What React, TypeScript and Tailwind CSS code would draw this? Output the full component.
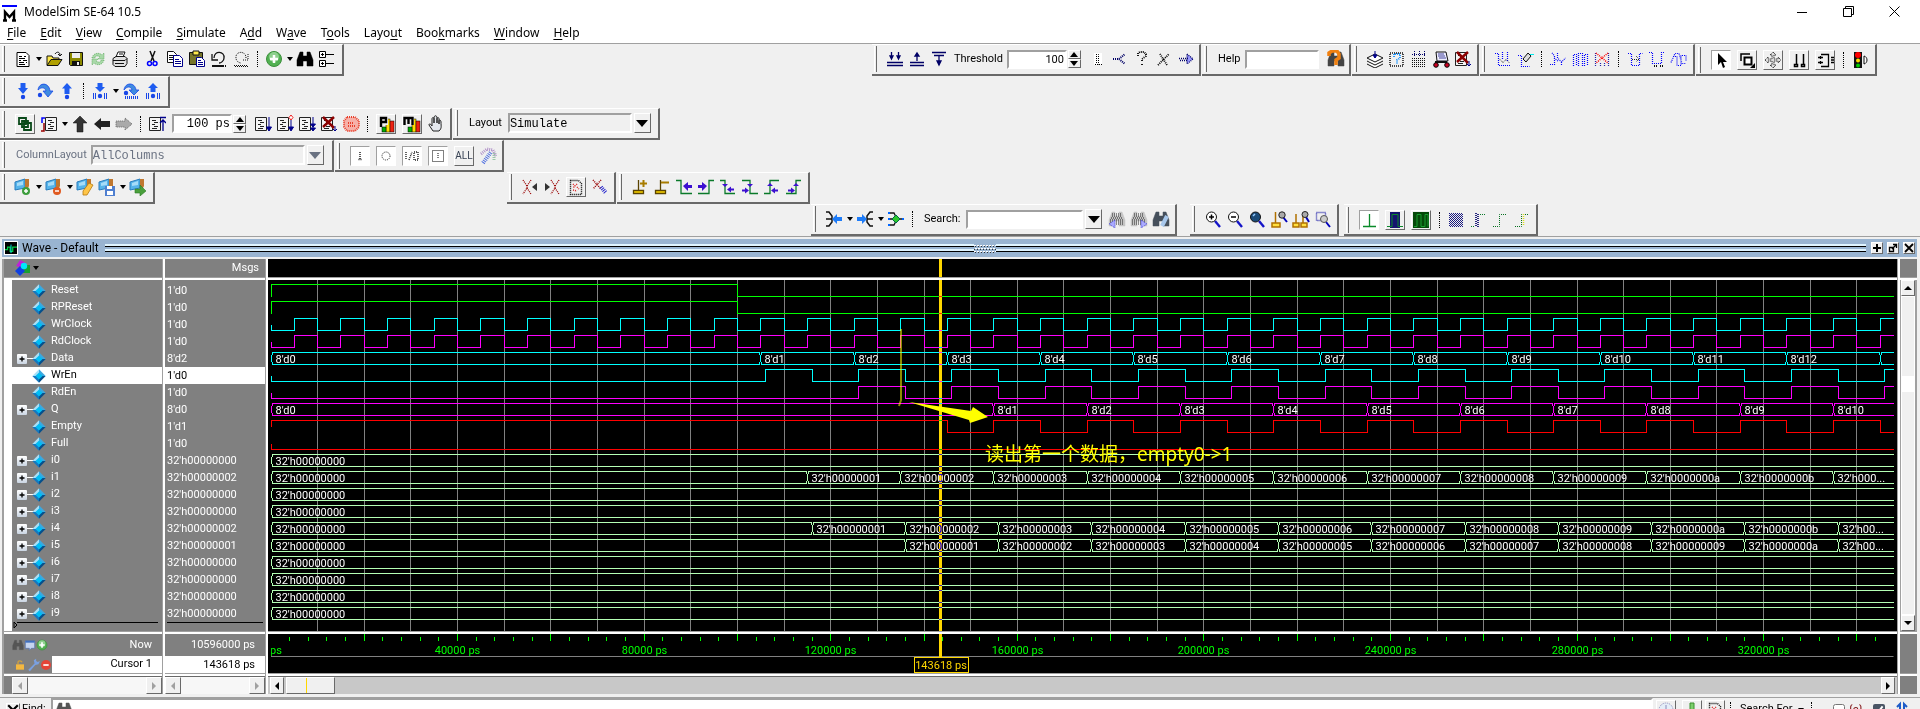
import type { ReactNode } from 'react';
import clsx from 'clsx';

type Point = [number, string];

interface Signal {
  name: string;
  value: string;
  color: string;
  start?: 0 | 1;
  lead?: number;
  edges?: number[];
  bus?: Point[];
}

const GREEN = '#00ff00';
const CYAN = '#00ffff';
const MAGENTA = '#ff00ff';
const RED = '#ff0000';
const MINT = '#b4ffb4';

const T_END = 347800;
const PX_PER_PS = 0.0046643;
const ROW = 17;
const CURSOR = 143618;

const range = (from: number, step: number, to = T_END) => {
  const out: number[] = [];
  for (let t = from; t < to; t += step) out.push(t);
  return out;
};

const hex = (n: number) => `32'h${n.toString(16).padStart(8, '0')}`;

const dataBus: Point[] = [[0, "8'd0"], ...range(105000, 20000, 340000).map((t, i): Point => [t, `8'd${i + 1}`]), [345000, '']];
const qBus: Point[] = [[0, "8'd0"], ...range(155000, 20000).map((t, i): Point => [t, `8'd${i + 1}`])];

function hexBus(from: number, last: string): Point[] {
  const steps = range(from, 20000);
  return [[0, hex(0)], ...steps.map((t, i): Point => [t, i === steps.length - 1 ? last : hex(i + 1)])];
}

const idle: Point[] = [[0, hex(0)]];
const clock = range(5000, 5000);

const signals: Signal[] = [
  { name: 'Reset', value: "1'd0", color: GREEN, start: 1, lead: 12, edges: [100000] },
  { name: 'RPReset', value: "1'd0", color: GREEN, start: 1, lead: 12, edges: [100000] },
  { name: 'WrClock', value: "1'd0", color: CYAN, start: 0, edges: clock },
  { name: 'RdClock', value: "1'd0", color: MAGENTA, start: 0, edges: clock },
  { name: 'Data', value: "8'd2", color: CYAN, bus: dataBus },
  { name: 'WrEn', value: "1'd0", color: CYAN, start: 0, edges: range(106000, 10000) },
  { name: 'RdEn', value: "1'd0", color: MAGENTA, start: 0, edges: range(126000, 10000) },
  { name: 'Q', value: "8'd0", color: MAGENTA, bus: qBus },
  { name: 'Empty', value: "1'd1", color: RED, start: 1, edges: range(145000, 10000) },
  { name: 'Full', value: "1'd0", color: RED, start: 0, edges: [] },
  { name: 'i0', value: hex(0), color: MINT, bus: idle },
  { name: 'i1', value: hex(2), color: MINT, bus: hexBus(115000, "32'h000...") },
  { name: 'i2', value: hex(0), color: MINT, bus: idle },
  { name: 'i3', value: hex(0), color: MINT, bus: idle },
  { name: 'i4', value: hex(2), color: MINT, bus: hexBus(116000, "32'h00...") },
  { name: 'i5', value: hex(1), color: MINT, bus: hexBus(136000, "32'h00...") },
  { name: 'i6', value: hex(0), color: MINT, bus: idle },
  { name: 'i7', value: hex(0), color: MINT, bus: idle },
  { name: 'i8', value: hex(0), color: MINT, bus: idle },
  { name: 'i9', value: hex(0), color: MINT, bus: idle },
];

const tx = (t: number) => Math.floor(3 + t * PX_PER_PS) + 0.5;

function digitalPath(s: Signal, mid: number) {
  const y = (level: number) => (level ? mid - 6 : mid + 6);
  let level = s.start ?? 0;
  const lead = s.lead ?? 6;
  let d = `M${tx(0)} ${level ? y(1) + lead : y(0) - lead}V${y(level)}`;
  for (const t of s.edges ?? []) {
    level = level ? 0 : 1;
    d += `H${tx(t)}V${y(level)}`;
  }
  return `${d}H${tx(T_END)}`;
}

function busPath(points: Point[], mid: number) {
  const top = mid - 6;
  const bottom = mid + 6;
  return points
    .map(([t], i) => {
      const x = tx(t);
      const end = i + 1 < points.length ? tx(points[i + 1][0]) - 1 : tx(T_END);
      const close = i + 1 < points.length ? `M${end} ${top}v2l1 1M${end} ${bottom}v-2l1 -1` : '';
      return `M${end} ${top}H${x + 1}v2l-1 1V${bottom - 3}l1 1V${bottom}H${end}${close}`;
    })
    .join('');
}

function WaveCanvas() {
  return (
    <svg className="block h-[351px] w-full bg-black font-[Roboto,sans-serif] text-[11px]">
      <g shapeRendering="crispEdges" fill="none">
        {range(10000, 10000).map((t) => (
          <path key={t} d={`M${tx(t)} 0V351`} stroke="#808080" />
        ))}
        {signals.map((s, i) => {
          const mid = 10.5 + i * ROW;
          return <path key={s.name} d={s.bus ? busPath(s.bus, mid) : digitalPath(s, mid)} stroke={s.color} />;
        })}
      </g>
      {signals.map((s, i) =>
        s.bus?.map(([t, label]) => (
          <text key={`${s.name}${t}`} x={tx(t) + 4} y={15 + i * ROW} fill="#fff">{label}</text>
        )),
      )}
      <rect x={tx(CURSOR) - 1.5} width="3" height="351" fill="#ffd700" className="mix-blend-difference" />
      <path d="M633 49V120l-2 6" stroke="#ffff00" strokeOpacity=".55" strokeWidth="2" fill="none" />
      <path d="M641 122L703 131L705 127L720 137L702 143L701 140Z" fill="#ffff00" />
      <text x="717" y="181" fill="#ffff00" className="font-['Noto_Sans','Noto_Sans_CJK_SC',sans-serif] text-[19px]">
        读出第一个数据，empty0-&gt;1
      </text>
    </svg>
  );
}

function Ruler() {
  return (
    <svg className="block h-[39px] w-full bg-black font-[Roboto,sans-serif] text-[11px]">
      <clipPath id="ruler-area"><rect x="3" width="4000" height="39" /></clipPath>
      <g clipPath="url(#ruler-area)">
        <g shapeRendering="crispEdges" stroke={GREEN}>
          {range(4000, 4000).map((t) => (
            <path key={t} d={`M${tx(t)} ${t % 20000 ? 3 : 0}V7`} />
          ))}
        </g>
        {range(0, 40000).map((t) => (
          <text key={t} x={tx(t)} y="20" fill={GREEN} textAnchor="middle">{t} ps</text>
        ))}
        <path d={`M3 22.5H${tx(T_END)}`} stroke="#808080" />
        <rect x={tx(CURSOR) - 1.5} width="3" height="23" fill="#ffd700" />
        <rect x="646.5" y="23.5" width="54" height="15" fill="#000" stroke="#ffd700" />
        <text x="673" y="35" fill="#ffd700" textAnchor="middle">143618 ps</text>
      </g>
    </svg>
  );
}

/* ---------- toolbar drawings, all on an 18 x 18 grid ---------- */

const dots = { strokeDasharray: '1 1' };
const navy = '#00008b';

const page = <path d="M3 2.500h9l3 3v11H3zM5 6.500h3m2 0h2M5 8.500h6M5 10.500h2m2 0h4M5 12.500h5m2 0h1M5 14.500h6" fill="#fff" stroke="#000" />;
const sheet = <path d="M1.500 2.500h11v13h-11zM4 5.500h4M6 7.500h4M4 9.500h3M6 11.500h4M4 13.500h5" fill="#f4f4f4" stroke="#222" />;
const binoculars = (c: string) => (
  <path d="M4 2h3v4h4V2h3l3 8v6h-6v-5H7v5H1v-6zM6 7v3M12 7v3" fill={c} stroke={c} strokeWidth=".5" />
);
const dotted = 'M2 10h14M2 12h14M2 14h14M3 8h12M4 6h10M4 4h10';
const flag = (
  <>
    <path d="M1 4l10-3v9L1 12z" fill="#56b4ea" stroke="#2a7dbd" />
    <path d="M3 5l6-2v4L3 8z" fill="#a6dcf8" />
    <path d="M11 1h4v7l-2 4h-2z" fill="#c07830" />
  </>
);
const stepBall = (y: number) => <circle cx="9" cy={y} r="2.200" fill="#1746e8" />;
const lens = (c: string) => (
  <>
    <path d="M11 11l5 6" stroke="#1414c8" strokeWidth="2.400" />
    <circle cx="7.500" cy="7" r="5" fill={c} stroke="#111" />
  </>
);
const bars = (
  <>
    <rect x="9" y="4" width="4" height="13" fill="#fd0" stroke="#000" strokeWidth=".5" />
    <rect x="13" y="6" width="4" height="11" fill="#e21" stroke="#000" strokeWidth=".5" />
    <rect x="5" y="12" width="4" height="5" fill="#0a0" stroke="#000" strokeWidth=".5" />
  </>
);
const cursorBase = <path d="M2.500 12.500h10v3h-10zM7.500 12V2" fill="#ffd700" stroke="#5a4300" strokeWidth="1.300" />;

const icons: Record<string, ReactNode> = {
  page,
  open: <><path d="M2 15V6h5l1 2h6v2" fill="#ffe94a" stroke="#111" /><path d="M2 15.500l4-6h11l-4 6z" fill="#b0a000" stroke="#111" /><path d="M10 4c2-3 5-2 5 1m-2-1l2 2 2-2" fill="none" stroke="#111" /></>,
  save: <><path d="M2.500 2.500h13v13h-12l-1-1z" fill="#8c8a00" stroke="#111" /><path d="M5 3h8v5H5z" fill="#eee" /><path d="M5 11h8v5H5z" fill="#111" /><path d="M10 12h2v3h-2z" fill="#eee" /></>,
  reload: <path d="M3 8c1-5 7-6 10-3l2-2v6H9l2-2C8 5 6 6 6 8zM15 10c-1 5-7 6-10 3l-2 2V9h6l-2 2c3 2 5 1 5-1z" fill="#a8d8a8" stroke="#5aa85a" strokeWidth=".8" {...dots} />,
  print: <><path d="M5 7l2-5h7l-2 5z" fill="#fff" stroke="#111" /><path d="M2 8.500l3-2h9l2 2v5l-2 3H4l-2-2z" fill="#e0e0e0" stroke="#111" /><path d="M2 10.500h12M4 13.500h9M8 4h4M14 10.500l2-2" stroke="#111" /></>,
  cut: <><path d="M6 1l4 10M11 1L7 11" stroke="#111" strokeWidth="1.500" /><circle cx="5.500" cy="13.500" r="2" fill="none" stroke="#00f" strokeWidth="1.500" /><circle cx="11" cy="13.500" r="2" fill="none" stroke="#00f" strokeWidth="1.500" /></>,
  copy: <><path d="M1.500 1.500h6l3 3v8h-9zM3 5.500h5M3 7.500h5M3 9.500h5" fill="#fff" stroke="#111" /><path d="M7.500 5.500h6l3 3v8h-9zM9 9.500h4M9 11.500h6M9 13.500h6" fill="#fff" stroke={navy} /></>,
  paste: <><path d="M1.500 2.500h13v12h-13z" fill="#77752a" stroke="#111" /><path d="M5 1h6v4H5z" fill="#ffe94a" stroke="#111" /><path d="M8.500 7.500h5l3 3v6h-8zM10 10.500h3M10 12.500h5M10 14.500h5" fill="#fff" stroke={navy} /></>,
  undo: <><path d="M4 8c0-8 11-7 10 0 0 3-3 5-5 5M2 4v6h6" fill="none" stroke="#111" strokeWidth="1.300" /><path d="M2 16h11" stroke="#111" strokeWidth="2" /><path d="M13 16h4" stroke="#111" strokeWidth="2" {...dots} /></>,
  redo: <path d="M14 8C14 0 3 1 4 8c0 3 3 5 5 5M16 4v6h-6M2 15.500h14M3 16.500h14" fill="none" stroke="#111" {...dots} />,
  plus: <><circle cx="9" cy="9" r="7.500" fill="#52b152" stroke="#3b8f3b" /><circle cx="9" cy="7" r="5" fill="#8fd08f" /><path d="M9 5v8M5 9h8" stroke="#fff" strokeWidth="2.500" /></>,
  find: binoculars('#000'),
  findOff: binoculars('#555'),
  findPrev: <>{binoculars('#c4c4c4')}<path d={dotted} stroke="#222" {...dots} /><path d="M7 10l-6 4 6 4z" fill="#aaf" stroke="#33c" strokeWidth=".8" {...dots} /></>,
  findNext: <>{binoculars('#c4c4c4')}<path d={dotted} stroke="#222" {...dots} /><path d="M11 10l6 4-6 4z" fill="#aaf" stroke="#33c" strokeWidth=".8" {...dots} /></>,
  findOpt: <>{binoculars('#46505c')}<path d="M15 6l-5 10" stroke="#a8c8ec" strokeWidth="4" /></>,
  findHelp: <>{binoculars('#444')}<path d="M2 6V3l3-2h5l2 3v4l-3 2v5" fill="none" stroke="#f08010" strokeWidth="3.500" /></>,
  tree: <><path d="M1.500 1.500h6v6h-6zM1.500 10.500h6v6h-6z" fill="#fff" stroke="#000" /><path d="M3 4.500h3M4.500 3v3M3 13.500h3M4.500 12v3M8 4.500h8M8 13.500h8" stroke="#000" /></>,
  stepIn: <><path d="M6.500 1h5v5H14L9 12 4 6h2.500z" fill="#1e5cf0" />{stepBall(15)}</>,
  stepOver: <><path d="M2 8c1-8 11-8 12 1h3l-5 6-5-6h3c-1-4-5-4-8-1z" fill="#3f8be0" stroke="#1746e8" strokeWidth=".8" /><circle cx="4" cy="13" r="2.200" fill="#1746e8" /></>,
  stepOut: <><path d="M6.500 12h5V6.500H14L9 1 4 6.500h2.500z" fill="#1e5cf0" />{stepBall(15)}</>,
  stepInC: <><path d="M6.500 1h5v4H14L9 10 4 5h2.500z" fill="#1e5cf0" />{stepBall(14)}<path d="M2.500 11v6M4.500 11v6M13.500 11v6M15.500 11v6" stroke="#1746e8" /></>,
  stepOverC: <><path d="M2 8c1-8 11-8 12 0h3l-5 5-5-5h3c-1-4-5-4-8 0z" fill="#3f8be0" stroke="#1746e8" strokeWidth=".8" /><circle cx="4" cy="11" r="2.200" fill="#1746e8" /><path d="M3 15.500h14" stroke="#1746e8" strokeWidth="3" {...dots} /></>,
  stepOutC: <><path d="M6.500 10h5V6H14L9 1 4 6h2.500z" fill="#1e5cf0" />{stepBall(14)}<path d="M2.500 11v6M4.500 11v6M13.500 11v6M15.500 11v6" stroke="#1746e8" /></>,
  link: <path d="M3 3h7v6H3zM8 8h7v7H8zM6 6h6v6H6z" fill="none" stroke="#0a4a1a" strokeWidth="1.800" />,
  restart: <><g transform="translate(4)">{sheet}</g><path d="M1 16h3V8" fill="none" stroke="#900" strokeWidth="1.500" /><path d="M5 3H2v5" fill="none" stroke="#00f" strokeWidth="1.500" /></>,
  up: <path d="M9 1l7 7h-4v9H6V8H2z" fill="#333" stroke="#111" strokeWidth=".5" />,
  left: <path d="M1 9l7-6v3h9v6H8v3z" fill="#222" />,
  right: <path d="M17 9l-7-6v3H1v6h9v3z" fill="#aaa" stroke="#666" {...dots} />,
  runTop: <>{sheet}<path d="M12 2.500h6M15 16V5m-3 3l3-3 3 3" fill="none" stroke={navy} strokeWidth="1.300" /></>,
  run: <>{sheet}<path d="M15 2v13m-2.500-3l2.500 4 2.500-4z" fill={navy} stroke={navy} /></>,
  runAll: <>{sheet}<path d="M15 5v10m-2.500-3l2.500 4 2.500-4z" fill={navy} stroke={navy} /><path d="M15 0l2 2.500-2 2.500-2-2.500z" fill="#fff" stroke="#e22" /></>,
  runCont: <>{sheet}<path d="M15 2v13m-2.500-6l2.500 3 2.500-3zm0 4l2.500 3 2.500-3z" fill={navy} stroke={navy} /></>,
  breakRun: <>{sheet}<path d="M3 2l11 11M14 2L3 12" stroke="#8b0000" strokeWidth="2.500" /><path d="M15 11v5m-2-2l2 2 2-2" fill="none" stroke={navy} /></>,
  stop: <path d="M5 2h8l4 4v6l-4 4H5l-3-4V6zM6 8h6M6 11h7" fill="#f6b0a8" stroke="#e8402c" strokeWidth="2" {...dots} />,
  perf: <>{bars}<path d="M2 1h9v9H2z" fill="#f0f0f0" /><path d="M4 12V3h5v4H4" fill="none" stroke="#000" strokeWidth="2.400" /></>,
  mem: <>{bars}<path d="M0 1h11v9H0z" fill="#f0f0f0" /><path d="M1.500 10V3h8v7M5.500 3v6" fill="none" stroke="#000" strokeWidth="2.400" /></>,
  hand: <path d="M6 16l-4-6c0-2 2-1 3 1V4c0-2 2-2 2 0v4-5c0-3 3-3 3 0v5-4c0-2 2-2 2 0v5-3c0-2 2-1 2 1 0 5 1 6-2 9z" fill="#e4e8ee" stroke="#222" />,
  one: <path d="M9 5v8M7.500 12.500h3" stroke="#222" {...dots} strokeWidth="1.500" />,
  oval: <circle cx="9" cy="9" r="4" fill="none" stroke="#222" {...dots} />,
  inout: <path d="M3 5v8M6 13l3-8M14 5h-3v8h4V5" fill="none" stroke="#222" {...dots} strokeWidth="1.400" />,
  boxed: <path d="M3.500 3.500h11v11h-11zM9 6v6" fill="none" stroke="#000" {...dots} />,
  wrench: <><path d="M4 16L12 5" stroke="#4f6fe0" strokeWidth="4" {...dots} /><path d="M2 7l6-5 6 1 3 6" fill="none" stroke="#b090c8" strokeWidth="3" {...dots} /><path d="M15 6v7" stroke="#9cc8a8" strokeWidth="3" {...dots} /></>,
  flagAdd: <>{flag}<circle cx="12" cy="13" r="4" fill="#3d9e3d" /><path d="M12 11v4M10 13h4" stroke="#fff" strokeWidth="1.500" /></>,
  flagDel: <>{flag}<circle cx="12" cy="13" r="4" fill="#e05a20" /><path d="M10 13h4" stroke="#fff" strokeWidth="1.500" /></>,
  flagEdit: <>{flag}<path d="M13 5l4 2-6 10-4 0 0-4z" fill="#ffc548" stroke="#b57a10" strokeWidth=".8" /></>,
  flagSave: <>{flag}<path d="M7 8h10v10H7z" fill="#4f7fd0" /><path d="M9 8h5v3H9zM9 13h6v4H9z" fill="#fff" /></>,
  flagGo: <>{flag}<path d="M6 11h5V7l6 6-6 5v-3H6z" fill="#4aa03c" stroke="#2a7a22" strokeWidth=".6" /></>,
  xPrev: <><path d="M2 2l4 6v2l-4 6M10 2L6 8m0 2l4 6" fill="none" stroke="#900" strokeWidth="1.300" {...dots} /><path d="M16 5v8l-5-4z" fill="#333" /></>,
  xNext: <><path d="M8 2l4 6v2l-4 6M16 2l-4 6m0 2l4 6" fill="none" stroke="#900" strokeWidth="1.300" {...dots} /><path d="M2 5v8l5-4z" fill="#333" /></>,
  xPage: <><path d="M3.500 2.500h8l3 3v11h-11z" fill="none" stroke="#000" strokeWidth="1.400" {...dots} /><path d="M6 6l2 2M10 9l2 2M6 12l4 1M10 6l-4 4" stroke="#d22" strokeWidth="1.400" {...dots} /></>,
  xPen: <><path d="M2 2l8 9M10 2L2 11" stroke="#900" strokeWidth="1.500" {...dots} /><path d="M10 9l5 6" stroke="#22c" strokeWidth="4" {...dots} /></>,
  curAdd: <>{cursorBase}<path d="M9 5.500h7M12.500 2v7" stroke="#a87c00" strokeWidth="2" /></>,
  curDel: <>{cursorBase}<path d="M8 4.500h8" stroke="#a87c00" strokeWidth="2" /></>,
  edgePrev: <><path d="M1 2.500h5v13h11" fill="none" stroke="#0a7a2a" strokeWidth="1.300" /><path d="M8 8l5-4v3h4v3h-4v3z" fill="#3c10d0" /></>,
  edgeNext: <><path d="M1 15.500h11v-13h5" fill="none" stroke="#0a7a2a" strokeWidth="1.300" /><path d="M10 8L5 4v3H1v3h4v3z" fill="#3c10d0" /></>,
  fallPrev: <><path d="M1 2.500h5v13h10" fill="none" stroke="#0a7a2a" strokeWidth="1.300" /><path d="M3 6h6L6 9zM8 11.500l4-3v2h3v2h-3v2z" fill="#3c10d0" /></>,
  fallNext: <><path d="M1 2.500h8v13h8" fill="none" stroke="#0a7a2a" strokeWidth="1.300" /><path d="M6 6h6L9 9zM8 12.500l-4-3v2H1v2h3v2z" fill="#3c10d0" /></>,
  risePrev: <><path d="M1 15.500h6v-13h9" fill="none" stroke="#0a7a2a" strokeWidth="1.300" /><path d="M4 8h6L7 5zM8 12.500l4-3v2h3v2h-3v2z" fill="#3c10d0" /></>,
  riseNext: <><path d="M1 15.500h10v-13h5" fill="none" stroke="#0a7a2a" strokeWidth="1.300" /><path d="M8 8h6l-3-3zM10 12.500l-4-3v2H3v2h3v2z" fill="#3c10d0" /></>,
  fanIn: <><path d="M1 2h3l3 4v6l-3 4H1M1 9h6" fill="none" stroke="#111" strokeWidth="1.500" /><path d="M7 9l5-5v3h5v4h-5v3z" fill="#1e7cf8" /></>,
  fanOut: <><path d="M17 2h-3l-3 4v6l3 4h3M11 9h6" fill="none" stroke="#111" strokeWidth="1.500" /><path d="M11 9L6 4v3H1v4h5v3z" fill="#1e7cf8" /></>,
  fanNode: <><path d="M2 3h5l3 6-3 6H2M2 9h13" fill="none" stroke="#111" strokeWidth="1.300" /><path d="M9 5l4 4-4 4-4-4z" fill="#2bc82b" stroke="#064" /><path d="M1 2h2v2H1zM1 8h2v2H1zM1 14h2v2H1zM15 8h2v2h-2z" fill="#06f" /></>,
  zoomIn: <>{lens('#fff')}<path d="M5 7h5M7.500 4.500v5" stroke="#000" strokeWidth="1.500" /></>,
  zoomOut: <>{lens('#fff')}<path d="M5 7h5" stroke="#000" strokeWidth="1.500" /></>,
  zoomFull: <>{lens('#1a4a78')}<path d="M5 6l2-2" stroke="#9cf" strokeWidth="1.500" /></>,
  zoomCur: <><path d="M2 13h8v4H2zM5.500 13V2" fill="#ffe040" stroke="#b07000" strokeWidth="1.500" /><path d="M13 7l4 5" stroke="#00b" strokeWidth="2" /><circle cx="12" cy="5" r="3.200" fill="#aaa" stroke="#222" /></>,
  zoomTwo: <><path d="M1 13h6v4H1zM9 13h6v4H9zM4 13V4M11 13V6" fill="#ffe040" stroke="#b07000" strokeWidth="1.500" /><path d="M14 7l3 5" stroke="#00b" strokeWidth="2" /><circle cx="13" cy="4.500" r="3" fill="#aaa" stroke="#222" /></>,
  zoomArea: <><path d="M2.500 2.500h9v8h-9z" fill="none" stroke="#22a" strokeWidth="1.400" {...dots} /><path d="M12 12l4 5" stroke="#00b" strokeWidth="2" /><circle cx="10" cy="9" r="3.500" fill="#ccc" stroke="#555" /></>,
  waveOne: <path d="M9.500 3v12M3 15.500h13" stroke="#0a8a2a" strokeWidth="1.300" />,
  waveBlue: <><path d="M4 1h10v16H4z" fill="#14146e" /><path d="M1 15.500h5v-12h6v12h5" fill="none" stroke="#0a8a2a" /></>,
  waveGreen: <><path d="M1 1h16v16H1z" fill="#064a0a" /><path d="M2 15.500h3v-12h4v12h4v-12h3v12" fill="none" stroke="#1aa030" /></>,
  hatch: <path d="M2 2.500h14M2 4.500h14M2 6.500h14M2 8.500h14M2 10.500h14M2 12.500h14M2 14.500h14M3 3.500h14M3 5.500h14M3 7.500h14M3 9.500h14M3 11.500h14M3 13.500h14M3 15.500h14" stroke="#1c1c80" {...dots} />,
  hatchEdge: <><path d="M7 2v14M9 3v14" stroke="#2a2a80" strokeWidth="2" {...dots} /><path d="M2 15.500h4M11 3.500h5" stroke="#0a7a2a" {...dots} /></>,
  stepEdge: <path d="M2 15.500h6.500v-12h7" fill="none" stroke="#067020" {...dots} />,
  stepEdgeY: <><path d="M2 15.500h6.500v-12h7" fill="none" stroke="#067020" {...dots} /><path d="M10.500 3v11" stroke="#dd2" strokeWidth="1.500" {...dots} /></>,
  downDown: <path d="M1 12.500h16M1 15.500h16M5.500 2v7M12.500 2v7M4 6h3l-1.500 3zM11 6h3l-1.500 3z" fill={navy} stroke="#000066" strokeWidth="1.300" />,
  upLine: <path d="M2 12.500h14M2 15.500h14M9 11V4M7 6h4L9 3z" fill={navy} stroke="#000066" strokeWidth="1.300" />,
  downLine: <path d="M2 2.500h14M4 5.500h10M9 6v8M7 11h4l-2 4z" fill={navy} stroke="#000066" strokeWidth="1.300" />,
  bit: <><path d="M5 3h8v12H5z" fill="#fff" /><path d="M7 4.500h2.500v10M6 14.500h7M7.500 6v7" fill="none" stroke="#000" {...dots} /></>,
  branch: <path d="M2 9h6l6-5M8 9l6 5" fill="none" stroke="#006" strokeWidth="2" {...dots} />,
  query: <path d="M5 6V3l2-1h4l2 2v2L9 9v3M9 14v2" fill="none" stroke="#000" strokeWidth="1.800" {...dots} />,
  cross: <path d="M3 15L14 4M5 4l7 11" fill="none" stroke="#000" strokeWidth="1.800" {...dots} />,
  goto: <path d="M2 8.500h9M3 10.500h8M10 4l6 5-6 5z" fill="#99f" stroke="#006" strokeWidth="1.300" {...dots} />,
  stack: <><path d="M1 8l8-4 8 4-8 4zM1 11l8 4 8-4M1 14l8 4 8-4" fill="#fff" stroke="#111" /><path d="M9 1v7M7 5h4L9 8z" fill={navy} stroke={navy} /></>,
  stackQ: <><path d="M2 3h13v13H2z" fill="none" stroke="#111" strokeWidth="1.500" {...dots} /><path d="M6 7V4h6v4L9 10v4" fill="none" stroke="#29f" strokeWidth="2" {...dots} /></>,
  grid: <><path d="M2 8.500h14M2 10.500h14M2 12.500h14M2 14.500h14M2 16.500h14" stroke="#111" {...dots} /><path d="M4.500 1v6M9.500 1v6M14.500 1v6M2 4.500h14" stroke="#006" {...dots} /></>,
  cart: <><path d="M4 2h10l2 9H5z" fill="#eef" stroke="#111" /><path d="M6 4h6M6 6h7M7 8h7" stroke="#449" /><path d="M3 12h12" stroke="#111" strokeWidth="2" /><circle cx="4" cy="15" r="2.300" fill="#c02" stroke="#000" /><circle cx="15" cy="15" r="2.300" fill="#c02" stroke="#000" /></>,
  uA: <><path d="M1 3.500h3.500v12H17M8.500 2v8M13.500 2v9" fill="none" stroke="#00f" strokeWidth="1.200" {...dots} /><path d="M6 9.500l3 3 3-3 3 3" fill="none" stroke="#000" {...dots} /></>,
  uB: <><path d="M2 5.500h3.500v11h8" fill="none" stroke="#00f" strokeWidth="1.200" {...dots} /><path d="M7 9l5-6 3 3-5 6z" fill="#ddd" stroke="#111" /><path d="M14 4.500h4" stroke="#0ee" /></>,
  uC: <path d="M1 14.500h4.500V6L3 3M8.500 3v5l4 4 4-4M12.500 12v4M5 8l4 3" fill="none" stroke="#00f" strokeWidth="1.200" {...dots} />,
  uD: <path d="M2.500 16V4.500h3V16M7.500 16V3.500h4V16M13.500 16V4.500h3V16" fill="none" stroke="#00f" strokeWidth="1.200" {...dots} />,
  uE: <><path d="M2.500 16V3M15.500 16V3M7.500 16v-4M11.500 16v-4" stroke="#22a" strokeWidth="1.200" {...dots} /><path d="M3 3l12 10M15 3L3 13" stroke="#f00" strokeWidth="1.500" {...dots} /></>,
  uF: <><path d="M2 3.500h3.500v12h8v-12h3" fill="none" stroke="#00f" strokeWidth="1.200" {...dots} /><path d="M6 9.500h7M10 6l3 3-3 3" fill="none" stroke="#222" {...dots} /></>,
  uG: <><path d="M1 2.500h3.500v11h9v-11H17" fill="none" stroke="#00f" strokeWidth="1.200" {...dots} /><path d="M6 16h3M12 16h3" stroke="#111" strokeWidth="2" {...dots} /></>,
  uH: <path d="M1 12.500l4-9h4l3 10h4M3 6.500h4v9h4v-10h5v6" fill="none" stroke="#00f" strokeWidth="1.200" {...dots} />,
  pointer: <path d="M6 2v12l3-3 2 6 2-1-2-5h4z" fill="#000" />,
  region: <><path d="M3 10V3h9" fill="none" stroke="#000" strokeWidth="1.500" /><path d="M6.500 6.500h7v7h-7z" fill="#fff" stroke="#000" strokeWidth="2" /><path d="M17 12v5h-5z" fill="#000" /></>,
  pan: <path d="M9 1l3 3H10v4h4V6l3 3-3 3v-2h-4v4h2l-3 3-3-3h2v-4H4v2L1 9l3-3v2h4V4H6z" fill="#ddd" stroke="#000" {...dots} />,
  twoCur: <path d="M6.500 3v10M13.500 3v10M4.500 13.500h3v2h-3zM11.500 13.500h3v2h-3z" fill="none" stroke="#000" strokeWidth="1.500" />,
  edit: <path d="M2 6.500h5M2 11.500h5M5 3.500h7.500v12H5M15 6.500h3M15 11.500h3M15 9h3M4.500 5v3M4.500 10v3" fill="none" stroke="#000" strokeWidth="1.300" />,
  lights: <><path d="M3 1h8v16H3z" fill="#111" /><circle cx="7" cy="4" r="3" fill="#f00" /><circle cx="7" cy="9.500" r="2" fill="#fd0" /><circle cx="7" cy="14.500" r="2" fill="#0c0" /><path d="M13 5c4 1 4 7 0 8z" fill="#fff" stroke="#111" /></>,
  shapes: <><path d="M7 1l6 3-4 5-6-2z" fill="#c020d8" /><path d="M10 6h7v8h-7z" fill="#1aa030" /><path d="M7 7l5 5-5 5-5-5z" fill="#1040e0" /><circle cx="11" cy="7" r="3.200" fill="#00e8f8" /></>,
  gem: <><path d="M9 1.500L16.500 9H9z" fill="#3aa8e0" /><path d="M9 1.500L1.500 9H9z" fill="#a8e0f8" /><path d="M1.500 9L9 16.500V9z" fill="#1478c0" /><path d="M16.500 9L9 16.500V9z" fill="#06508c" /><path d="M9 5l4 4-4 4-4-4z" fill="#00bef5" /></>,
  lock: <><path d="M6 8V5c0-3 5-3 6 0" fill="none" stroke="#d0a040" strokeWidth="2" /><path d="M3 8h12v8H3z" fill="#f4b840" /></>,
  wrenchSolid: <path d="M3 15l8-8-1-4 3-2v3l2 1 3-1-2 4-4 1-7 8z" fill="#7aa0e0" />,
  minus: <><circle cx="9" cy="9" r="7.500" fill="#e44438" /><path d="M5 9h8" stroke="#fff" strokeWidth="2.500" /></>,
  note: <><path d="M2 3h14v11h-5l-3 3v-3H2z" fill="#c4d4f0" stroke="#5070b0" /><path d="M2 4h14" stroke="#4070c0" strokeWidth="3" /></>,
  clockFace: <><circle cx="9" cy="9" r="7" fill="#e4eef8" stroke="#88b" {...dots} /><path d="M9 4v5l3 3" fill="none" stroke="#88b" /></>,
  barGreen: <path d="M7 2h4v14H7z" fill="#7ccf6c" stroke="#3c9030" />,
  arrows: <path d="M1 10h6V3L4 6M17 10h-6V3l3 3M1 13h16" fill="none" stroke="#1e5cc8" strokeWidth="2" />,
};

function Glyph({ name, className = 'size-[18px]' }: { name: string; className?: string }) {
  return <svg viewBox="0 0 18 18" aria-hidden="true" className={clsx('block shrink-0', className)}>{icons[name]}</svg>;
}

const RAISED = 'border border-t-white border-l-white border-r-[#696969] border-b-[#696969] bg-[#f0f0f0]';
const SUNKEN = 'border-2 border-t-[#a0a0a0] border-l-[#a0a0a0] border-r-white border-b-white';

function Tool({ name }: { name: string }) {
  return (
    <button aria-label={name} className="flex w-[22px] shrink-0 justify-center"><Glyph name={name} /></button>
  );
}

function BoxTool({ name, on, wide, text }: { name: string; on?: boolean; wide?: boolean; text?: string }) {
  return (
    <button
      aria-label={name}
      className={clsx(
        'flex size-5 shrink-0 items-center justify-center text-[10px] text-gray-700',
        wide && 'mx-[3px]',
        on ? 'border border-t-[#a0a0a0] border-l-[#a0a0a0] border-r-white border-b-white bg-white' : RAISED,
      )}
    >
      {text ?? <Glyph name={name} />}
    </button>
  );
}

const Caret = () => (
  <span className="flex w-[9px] shrink-0 justify-center">
    <svg viewBox="0 0 6 4" className="h-1 w-1.5 fill-black"><path d="M0 0h6L3 4z" /></svg>
  </span>
);

const Sep = () => <span className="mx-[5px] h-4 w-0 shrink-0 border-l border-dotted border-black" />;

function Bar({ className, low, children }: { className: string; low?: boolean; children: ReactNode }) {
  return (
    <div
      className={clsx(
        'flex h-8 shrink-0 items-center border-t border-r-2 border-b-2 border-t-white border-r-[#696969] border-b-[#696969]',
        !low && 'pb-px',
        className,
      )}
    >
      <span className="mr-[7px] ml-0.5 h-[26px] w-[3px] shrink-0 border-r border-l border-l-white border-r-[#696969]" />
      {children}
    </div>
  );
}

function Spinner() {
  return (
    <span className="ml-px flex w-[13px] flex-col">
      <button aria-label="Increase" className={clsx('flex h-[9px] items-center justify-center', RAISED)}>
        <svg viewBox="0 0 8 5" className="h-[5px] w-2"><path d="M4 0l4 5H0z" /></svg>
      </button>
      <button aria-label="Decrease" className={clsx('flex h-[9px] items-center justify-center', RAISED)}>
        <svg viewBox="0 0 8 5" className="h-[5px] w-2"><path d="M4 5l4-5H0z" /></svg>
      </button>
    </span>
  );
}

function DropArrow({ muted }: { muted?: boolean }) {
  return (
    <span className={clsx('ml-0.5 flex h-5 w-[17px] shrink-0 items-center justify-center', RAISED)}>
      <svg viewBox="0 0 12 7" className={clsx('h-[7px] w-3', muted && 'fill-gray-500')}><path d="M0 0h12L6 7z" /></svg>
    </span>
  );
}

const MONO = "font-['Liberation_Mono',monospace] text-[12px]";

const menus: [string, string, string][] = [
  ['', 'F', 'ile'], ['', 'E', 'dit'], ['', 'V', 'iew'], ['', 'C', 'ompile'], ['', 'S', 'imulate'], ['A', 'd', 'd'],
  ['W', 'a', 've'], ['T', 'o', 'ols'], ['Layo', 'u', 't'], ['Boo', 'k', 'marks'], ['', 'W', 'indow'], ['', 'H', 'elp'],
];

function TitleAndMenu() {
  return (
    <header className="shrink-0 border-b border-[#a0a0a0] bg-white font-['Noto_Sans',sans-serif] text-[12px] text-black">
      <div className="flex h-[23px] items-center">
        <svg viewBox="0 0 16 18" className="mt-1 ml-0.5 h-[18px] w-4"><path d="M0 0h15v2H0z" fill="#00f" /><path d="M3 16V7l4.500 5L12 7v9M1 15.500h4M10 15.500h4" fill="none" stroke="#000" strokeWidth="2.400" /></svg>
        <h1 className="ml-1.5 grow">ModelSim SE-64 10.5</h1>
        <div className="mr-5 flex gap-[35px]">
          <button aria-label="Minimize"><svg viewBox="0 0 11 11" className="size-[11px]"><path d="M0 6.500h10" stroke="#000" /></svg></button>
          <button aria-label="Restore"><svg viewBox="0 0 11 11" className="size-[11px]"><path d="M.5 2.500h8v8h-8zM2.500 2V.5h8v8H9" fill="none" stroke="#000" /></svg></button>
          <button aria-label="Close"><svg viewBox="0 0 11 11" className="size-[11px]"><path d="M.5.5l10 10M10.500.5l-10 10" stroke="#000" /></svg></button>
        </div>
      </div>
      <nav className="flex h-5 items-center gap-3.5 pl-[7px]">
        {menus.map(([pre, key, post]) => (
          <button key={pre + key + post}>{pre}<u className="underline-offset-2">{key}</u>{post}</button>
        ))}
      </nav>
    </header>
  );
}

function Toolbars() {
  return (
    <div className="shrink-0 text-[11px]">
      <div className="flex">
        <Bar className="w-[344px]">
          <Tool name="page" /><Caret /><Tool name="open" /><Tool name="save" /><Tool name="reload" /><Tool name="print" /><Sep />
          <Tool name="cut" /><Tool name="copy" /><Tool name="paste" /><Tool name="undo" /><Tool name="redo" /><Sep />
          <Tool name="plus" /><Caret /><Tool name="find" /><Tool name="tree" />
        </Bar>
        <Bar className="ml-[528px] w-[329px]">
          <Tool name="downDown" /><Tool name="upLine" /><Tool name="downLine" />
          <label htmlFor="threshold" className="mr-1 ml-1">Threshold</label>
          <input id="threshold" defaultValue="100" className={clsx('h-[19px] w-[60px] bg-white pr-px text-right', SUNKEN)} />
          <Spinner />
          <span className="w-1.5" />
          <Tool name="bit" /><Tool name="branch" /><Tool name="query" /><Tool name="cross" /><Tool name="goto" />
        </Bar>
        <Bar className="ml-px w-[149px]">
          <label htmlFor="help" className="mr-1 ml-1">Help</label>
          <input id="help" className={clsx('mr-1.5 h-[19px] w-[74px] bg-white', SUNKEN)} />
          <Tool name="findHelp" />
        </Bar>
        <Bar className="ml-px w-[127px]">
          <Tool name="stack" /><Tool name="stackQ" /><Tool name="grid" /><Tool name="cart" /><Tool name="breakRun" />
        </Bar>
        <Bar className="ml-px w-[215px]">
          <Tool name="uA" /><Tool name="uB" /><Sep /><Tool name="uC" /><Tool name="uD" /><Tool name="uE" /><Sep />
          <Tool name="uF" /><Tool name="uG" /><Tool name="uH" />
        </Bar>
        <Bar low className="ml-px w-[181px]">
          <BoxTool name="pointer" on wide /><BoxTool name="region" wide /><BoxTool name="pan" wide /><BoxTool name="twoCur" wide />
          <BoxTool name="edit" wide /><Sep /><Tool name="lights" />
        </Bar>
      </div>

      <div className="flex">
        <Bar className="w-[170px]">
          <Tool name="stepIn" /><Tool name="stepOver" /><Tool name="stepOut" /><Sep />
          <Tool name="stepInC" /><Caret /><Tool name="stepOverC" /><Tool name="stepOutC" />
        </Bar>
      </div>

      <div className="flex">
        <Bar low className="w-[452px]">
          <BoxTool name="link" wide /><Tool name="restart" /><Caret /><Tool name="up" /><Tool name="left" /><Tool name="right" /><Sep />
          <Tool name="runTop" />
          <input aria-label="Run length" defaultValue="100 ps" className={clsx('ml-1 h-[19px] w-[60px] bg-white text-right', SUNKEN, MONO)} />
          <Spinner />
          <span className="w-1.5" />
          <Tool name="run" /><Tool name="runAll" /><Tool name="runCont" /><Tool name="breakRun" /><Tool name="stop" /><Sep />
          <BoxTool name="perf" wide /><BoxTool name="mem" wide /><Tool name="hand" />
        </Bar>
        <Bar className="ml-px w-[207px]">
          <label htmlFor="layout" className="mr-1.5 ml-1">Layout</label>
          <select id="layout" className={clsx('h-5 w-[124px] appearance-none', SUNKEN, MONO)}><option>Simulate</option></select>
          <DropArrow />
        </Bar>
      </div>

      <div className="flex">
        <Bar className="w-[334px] text-gray-500">
          <label htmlFor="columns" className="mr-1 ml-1">ColumnLayout</label>
          <select id="columns" className={clsx('h-5 w-[214px] appearance-none', SUNKEN, MONO)}><option>AllColumns</option></select>
          <DropArrow muted />
        </Bar>
        <Bar low className="ml-px w-[169px]">
          <BoxTool name="one" on wide /><BoxTool name="oval" on wide /><BoxTool name="inout" on wide /><BoxTool name="boxed" on wide />
          <BoxTool name="all" wide text="ALL" /><Tool name="wrench" />
        </Bar>
      </div>

      <div className="flex">
        <Bar className="w-[155px]">
          <Tool name="flagAdd" /><Caret /><Tool name="flagDel" /><Caret /><Tool name="flagEdit" /><Tool name="flagSave" /><Caret /><Tool name="flagGo" />
        </Bar>
        <Bar className="ml-[352px] w-[109px]">
          <Tool name="xPrev" /><Tool name="xNext" /><BoxTool name="xPage" wide /><Tool name="xPen" />
        </Bar>
        <Bar className="ml-px w-[193px]">
          <Tool name="curAdd" /><Tool name="curDel" /><Tool name="edgePrev" /><Tool name="edgeNext" />
          <Tool name="fallPrev" /><Tool name="fallNext" /><Tool name="risePrev" /><Tool name="riseNext" />
        </Bar>
      </div>

      <div className="flex">
        <Bar className="ml-[811px] w-[366px]">
          <Tool name="fanIn" /><Caret /><Tool name="fanOut" /><Caret /><Tool name="fanNode" /><Sep />
          <label htmlFor="search" className="mr-1.5 ml-1.5">Search:</label>
          <input id="search" className={clsx('h-[19px] w-[117px] bg-white', SUNKEN)} />
          <DropArrow />
          <span className="w-1" />
          <Tool name="findPrev" /><Tool name="findNext" /><Tool name="findOpt" />
        </Bar>
        <Bar className="ml-[13px] w-[149px]">
          <Tool name="zoomIn" /><Tool name="zoomOut" /><Tool name="zoomFull" /><Tool name="zoomCur" /><Tool name="zoomTwo" /><Tool name="zoomArea" />
        </Bar>
        <Bar low className="ml-[5px] w-[194px]">
          <BoxTool name="waveOne" on wide /><BoxTool name="waveBlue" wide /><BoxTool name="waveGreen" wide /><Sep />
          <Tool name="hatch" /><Tool name="hatchEdge" /><Tool name="stepEdge" /><Tool name="stepEdgeY" />
        </Bar>
      </div>
    </div>
  );
}

const Grip = () => (
  <span className="flex h-2 grow flex-col justify-between">
    <span className="h-[3px] border-t-2 border-b border-t-[#dff4ff] border-b-black" />
    <span className="h-[3px] border-t-2 border-b border-t-[#dff4ff] border-b-black" />
  </span>
);

function PaneTitle() {
  return (
    <div className="flex h-[18px] shrink-0 items-center bg-[#99b4d1] px-0.5">
      <svg viewBox="0 0 14 14" className="size-3.5 border border-white bg-black"><path d="M0 9h3V6h3v5h3V6h5" fill="none" stroke="#0c4" strokeWidth="1.500" /><path d="M7 3v10" stroke="#0ff" /></svg>
      <h2 className="mr-1.5 ml-1 text-[12px]">Wave - Default</h2>
      <Grip />
      <svg className="h-[9px] w-[22px] shrink-0" shapeRendering="crispEdges"><path d="M0 1.500h22M1 4.500h21M0 7.500h22" stroke="#fff" strokeDasharray="2 1" /><path d="M1 2.500h21M0 5.500h22M1 8.500h21" stroke="#333" strokeDasharray="1 2" /></svg>
      <Grip />
      <div className="ml-[5px] flex gap-1">
        <button aria-label="Add pane" className={clsx('size-3', RAISED)}><svg viewBox="0 0 10 10"><path d="M5 1v8M1 5h8" stroke="#000" strokeWidth="2" /></svg></button>
        <button aria-label="Undock" className={clsx('size-3', RAISED)}><svg viewBox="0 0 10 10"><path d="M1.500 4.500h4v4h-4zM4 6l4-4M5 1.500h3.500V5" fill="none" stroke="#000" strokeWidth="1.300" /></svg></button>
        <button aria-label="Close pane" className={clsx('size-3', RAISED)}><svg viewBox="0 0 10 10"><path d="M1 1l8 8M9 1L1 9" stroke="#000" strokeWidth="1.800" /></svg></button>
      </div>
    </div>
  );
}

const HSplit = () => <div className="h-[3px] shrink-0 border-t border-t-[#a0a0a0] bg-white" />;
const VSplit = () => <div className="w-[3px] shrink-0 border-l border-l-[#a0a0a0] bg-white" />;

function Column({ className, head, foot, scroll, children }: {
  className: string; head?: ReactNode; foot: ReactNode; scroll: ReactNode; children: ReactNode;
}) {
  return (
    <div className={clsx('flex flex-col', className)}>
      <div className="flex h-[18px] items-center">{head}</div>
      <HSplit />
      <div className="h-[351px] overflow-hidden">{children}</div>
      <HSplit />
      <div className="h-[39px] overflow-hidden">{foot}</div>
      <HSplit />
      <div className="h-[18px]">{scroll}</div>
    </div>
  );
}

function ArrowButton({ dir, muted, className }: { dir: string; muted?: boolean; className: string }) {
  return (
    <button aria-label="Scroll" className={clsx('flex shrink-0 items-center justify-center', RAISED, className)}>
      <svg viewBox="0 0 8 8" className="size-2"><path d={dir} fill={muted ? '#a0a0a0' : '#000'} /></svg>
    </button>
  );
}

const LEFT = 'M6 0v8L2 4z';
const RIGHT = 'M2 0v8l4-4z';

const MutedScroll = () => (
  <div className="flex h-full border-t border-t-[#696969] bg-[#f7f7f7]">
    <ArrowButton dir={LEFT} muted className="w-4" />
    <span className="grow" />
    <ArrowButton dir={RIGHT} muted className="w-4" />
  </div>
);

function NameRow({ s }: { s: Signal }) {
  return (
    <div className={clsx('flex h-[17px] items-center', s.name === 'WrEn' ? 'bg-white text-black' : 'text-white')}>
      <span className="flex w-[19px] items-center pl-[5px]">
        {s.bus && (
          <button aria-label={`Expand ${s.name}`} className="size-2.5 shrink-0 rounded-[1px] bg-linear-to-b from-white to-slate-300">
            <svg viewBox="0 0 10 10"><path d="M5 2.500v5M2.500 5h5" stroke="#000" strokeWidth="1.300" /></svg>
          </button>
        )}
        {s.bus && <span className="h-px w-[6px] shrink-0 bg-white" />}
      </span>
      <Glyph name="gem" className="size-4" />
      <span className="pl-1">{s.name}</span>
    </div>
  );
}

function WavePane() {
  return (
    <section className="flex shrink-0 flex-col border-t border-t-[#a0a0a0] pt-0.5 pr-[3px] pl-0.5 text-[11px]">
      <PaneTitle />
      <div className="mt-0.5 flex border-l-2 border-l-[#a0a0a0]">
        <Column
          className="w-[158px] shrink-0 bg-[#808080]"
          head={<span className="flex items-center pl-[9px]"><Glyph name="shapes" /><Caret /></span>}
          foot={
            <div className="flex h-full flex-col">
              <div className="flex h-[22px] items-center pr-2.5 pl-2 text-white">
                <Glyph name="findOff" className="size-3" /><Glyph name="note" className="size-3" /><Glyph name="plus" className="size-3" />
                <span className="ml-auto">Now</span>
              </div>
              <div className="flex h-[17px] items-center pl-2.5">
                <Glyph name="lock" className="size-3" /><Glyph name="wrenchSolid" className="size-3.5" /><Glyph name="minus" className="size-3" />
                <span className="flex h-full grow items-center justify-end bg-white pr-2.5">Cursor 1</span>
              </div>
            </div>
          }
          scroll={<div className="h-full pl-2"><MutedScroll /></div>}
        >
          <div className="flex h-full">
            <span className="w-2 shrink-0 bg-white" />
            <div className="grow pt-0.5">
              {signals.map((s) => <NameRow key={s.name} s={s} />)}
              <svg className="h-2 w-full"><path d="M2 0v6l3-3z" fill="none" stroke="#000" /><path d="M5 .5h141" stroke="#000" shapeRendering="crispEdges" /></svg>
            </div>
          </div>
        </Column>
        <VSplit />
        <Column
          className="w-[100px] shrink-0 bg-[#808080]"
          head={<span className="ml-auto pr-1.5 text-white">Msgs</span>}
          foot={
            <div className="text-right">
              <div className="h-[22px] pr-2.5 leading-[22px] text-white">10596000 ps</div>
              <div className="h-[17px] bg-white pr-2.5 leading-[17px]">143618 ps</div>
            </div>
          }
          scroll={<MutedScroll />}
        >
          <div className="pt-0.5">
            {signals.map((s) => (
              <div key={s.name} className={clsx('h-[17px] pl-0.5 leading-[17px]', s.name === 'WrEn' ? 'bg-white text-black' : 'text-white')}>
                {s.value}
              </div>
            ))}
            <div className="mx-0.5 h-px bg-black" />
          </div>
        </Column>
        <VSplit />
        <Column
          className="min-w-0 grow"
          head={<svg className="h-full w-full bg-black"><rect x={tx(CURSOR) - 1.5} width="3" height="18" fill="#ffd700" /></svg>}
          foot={<Ruler />}
          scroll={
            <div className="flex h-full border-t border-t-[#696969] bg-[#c8c8c8] px-0.5">
              <ArrowButton dir={LEFT} className="w-3.5" />
              <span className={clsx('ml-0.5 h-full w-[49px]', RAISED)}><span className="ml-[19px] block h-full w-px bg-[#ffd700]" /></span>
              <ArrowButton dir={RIGHT} className="ml-auto w-3.5" />
            </div>
          }
        >
          <WaveCanvas />
        </Column>
        <VSplit />
        <Column
          className="w-[17px] shrink-0"
          head={<span className="h-full w-full bg-[#808080]" />}
          foot={<div className="h-full bg-[#808080]" />}
          scroll={<div className="h-full bg-[#808080]" />}
        >
          <div className="flex h-full flex-col border-r-2 border-l border-r-[#a0a0a0] border-l-[#a0a0a0] bg-[#f0f0f0]">
            <ArrowButton dir="M0 6h8L4 2z" className="h-4" />
            <div className="grow border border-white pt-[79px]"><div className="h-4 bg-white" /></div>
            <ArrowButton dir="M0 2h8L4 6z" className="h-4" />
          </div>
        </Column>
      </div>
    </section>
  );
}

function FindBar() {
  return (
    <form className="mt-[3px] flex h-6 shrink-0 items-center border-t border-t-[#a0a0a0] pl-1.5 text-[11px]">
      <button type="button" aria-label="Close find" className={clsx('mr-0.5 size-3.5', RAISED)}><svg viewBox="0 0 10 10"><path d="M1 1l8 8M9 1L1 9" stroke="#000" strokeWidth="1.800" /></svg></button>
      <label htmlFor="find" className="w-[29px]">Find:</label>
      <div className={clsx('flex h-6 grow items-center bg-white pl-0.5', SUNKEN)}>
        <Glyph name="findOff" /><input id="find" className="grow outline-none" />
      </div>
      <div className="flex w-[267px] shrink-0 items-center">
        <BoxTool name="clockFace" wide /><BoxTool name="barGreen" wide /><BoxTool name="xPage" />
        <Sep />
        <button type="button" className="mr-1 ml-1">Search For</button><Caret /><Sep />
        <input type="checkbox" aria-label="Match case" className="mr-1 ml-4 size-3" />
        <span className="text-[12px] text-red-900">{'{a}'}</span>
        <input type="checkbox" aria-label="Wrap search" defaultChecked className="mr-2 ml-2.5 size-3 accent-gray-600" />
        <Glyph name="arrows" />
      </div>
    </form>
  );
}

export default function App() {
  return (
    <div className="flex h-screen flex-col overflow-hidden bg-[#f0f0f0] font-[Roboto,'Noto_Sans_CJK_SC',sans-serif] text-black">
      <TitleAndMenu />
      <Toolbars />
      <WavePane />
      <FindBar />
    </div>
  );
}
